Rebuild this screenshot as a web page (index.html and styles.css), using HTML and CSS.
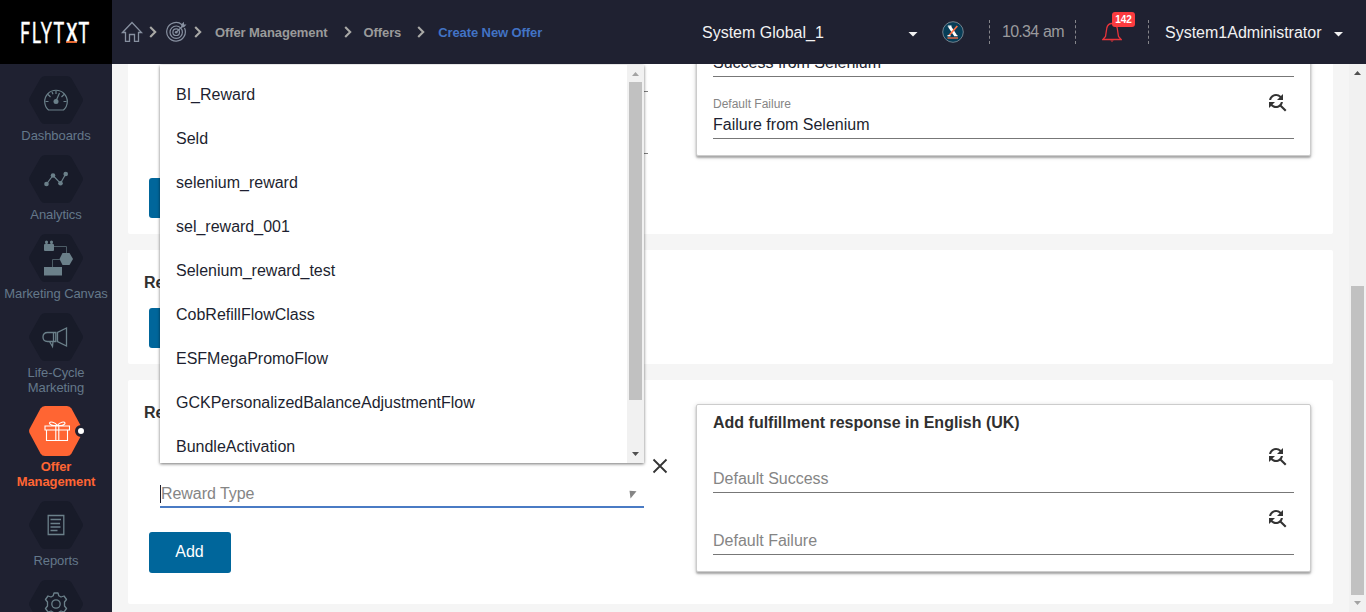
FILE: index.html
```html
<!DOCTYPE html>
<html lang="en">
<head>
<meta charset="utf-8">
<title>Create New Offer</title>
<link rel="stylesheet" href="styles.css">
</head>
<body>
<svg class="defs" width="0" height="0">
  <symbol id="find-replace" viewBox="0 0 24 24"><path d="M11 6c1.38 0 2.63.56 3.54 1.46L12 10h6V4l-2.05 2.05C14.68 4.78 12.93 4 11 4c-3.53 0-6.43 2.61-6.92 6H6.1c.46-2.28 2.48-4 4.9-4zm5.64 9.14c.66-.9 1.12-1.97 1.28-3.14H15.9c-.46 2.28-2.48 4-4.9 4-1.38 0-2.63-.56-3.54-1.46L10 12H4v6l2.05-2.05C7.32 17.22 9.07 18 11 18c1.55 0 2.98-.51 4.14-1.36L20 21.49 21.49 20l-4.85-4.86z"/></symbol>
  <symbol id="chevron" viewBox="0 0 8 12"><path d="M1.2 1l5 5-5 5" fill="none" stroke="#a9a9a6" stroke-width="2.1"/></symbol>
  <symbol id="hexagon" viewBox="0 0 54 48" preserveAspectRatio="none"><path d="M16 0H38Q41 0 42.5 2.500L53.500 22Q54.300 24 53.500 26L42.500 45.500Q41 48 38 48H16Q13 48 11.500 45.500L.5 26Q-.3 24 .5 22L11.500 2.500Q13 0 16 0Z"/></symbol>
</svg>
<header class="topbar">
  <div class="logo"><div class="wordmark">FLYT<span class="logo-x">X</span>T</div></div>
  <nav class="crumbs">
    <svg class="home" width="22" height="22" viewBox="0 0 22 22"><path d="M1.500 11.500L11 1.500l9.500 10H17.500V20.300H13.500V13.500H8.500V20.300H4.500V11.500Z" fill="none" stroke="#8790a0" stroke-width="1.300"/></svg>
    <svg class="chev c1" width="8" height="12"><use href="#chevron"/></svg>
    <svg class="target" width="22" height="22" viewBox="0 0 22 22"><g fill="none" stroke="#8790a0" stroke-width="1.200"><path d="M16 3.700A9.300 9.300 0 1 0 18.500 7"/><circle cx="10.200" cy="11.200" r="6.200"/><circle cx="10.200" cy="11.200" r="3.300"/><path d="M10.200 11.200L18 4"/></g><path d="M15.200 6.300V3.500L18 .8V3.500H20.500L18 6.300Z" fill="#8790a0"/><circle cx="10.200" cy="11.200" r="1.300" fill="#8790a0"/></svg>
    <svg class="chev c2" width="8" height="12"><use href="#chevron"/></svg>
    <span class="crumb">Offer Management</span>
    <svg class="chev c3" width="8" height="12"><use href="#chevron"/></svg>
    <span class="crumb">Offers</span>
    <svg class="chev c4" width="8" height="12"><use href="#chevron"/></svg>
    <span class="crumb current">Create New Offer</span>
  </nav>
  <div class="tenant"><span>System Global_1</span><i class="caret"></i></div>
  <svg class="badge-x" width="22" height="22" viewBox="0 0 22 22"><circle cx="11" cy="11" r="10.300" fill="#073d57" stroke="#71808c" stroke-width="1"/><path d="M7.500 5.500L13.500 14.500" stroke="#fff" stroke-width="3"/><path d="M5.800 5.200H9.500M12.200 14.700H15.500" stroke="#fff" stroke-width="1.300"/><path d="M15.300 5L7 14.500" stroke="#ff7043" stroke-width="1.700"/><path d="M5.500 14.700H8.500" stroke="#fff" stroke-width="1.300"/><path d="M5.500 17H16" stroke="#ff7043" stroke-width="1.300"/></svg>
  <div class="clock">10.34 am</div>
  <div class="alerts">
    <svg width="20" height="20" viewBox="0 0 20 20"><path d="M.8 17.500H19.200L16.500 14.500 15.200 6C14.500 3 12.500 1.500 10 1.500S5.500 3 4.800 6L3.500 14.500Z" fill="none" stroke="#e8343b" stroke-width="1.300"/><path d="M8.200 18.500H11.800Q10 20.800 8.200 18.500Z" fill="#e8343b"/></svg>
    <span class="count">142</span>
  </div>
  <div class="user"><span>System1Administrator</span><i class="caret"></i></div>
</header>
<div class="shell">
  <aside class="sidebar">
    <a class="item"><span class="hex"><svg class="hexbg"><use href="#hexagon"/></svg>
      <svg class="glyph" width="26" height="24" viewBox="0 0 26 24"><g fill="none" stroke="#6b808a" stroke-width="1.200"><path d="M5.500 22A11.300 11.300 0 1 1 20.500 22Z"/><path d="M2.500 13.500H5.500M20.500 13.500H23.500M5 6.500L7.500 9M21 6.500L18.500 9M13 3V6M9 4L10 6.200M13 13L16.500 5"/></g><circle cx="13" cy="13.500" r="2.500" fill="#6b808a"/></svg></span>
      <span class="label">Dashboards</span></a>
    <a class="item"><span class="hex"><svg class="hexbg"><use href="#hexagon"/></svg>
      <svg class="glyph" width="26" height="24" viewBox="0 0 26 24"><path d="M3.500 17L10 8.500 17.500 16.300 22.700 7" fill="none" stroke="#6b808a" stroke-width="1.200"/><g fill="#6b808a"><circle cx="3.500" cy="17" r="2.300"/><circle cx="10" cy="8.500" r="2.300"/><circle cx="17.500" cy="16.300" r="2.300"/><circle cx="22.700" cy="7" r="2.300"/></g></svg></span>
      <span class="label">Analytics</span></a>
    <a class="item"><span class="hex"><svg class="hexbg"><use href="#hexagon"/></svg>
      <svg class="glyph canvas-glyph" width="30" height="36" viewBox="0 0 30 36"><g fill="#6b808a"><rect x="1" y="4" width="10" height="7" rx="1"/><rect x="2.500" y="1.500" width="2" height="4"/><rect x="7.500" y="1.500" width="2" height="4"/><circle cx="3.500" cy="2" r="1.500"/><circle cx="8.500" cy="2" r="1.500"/><path d="M19.500 13H26.500L30 19 26.500 25H19.500L16.500 19Z"/><rect x="1" y="27" width="18" height="8.500"/></g><path d="M11 6.500H23.500V13M17 19.500H9.500V27" fill="none" stroke="#4c5c66" stroke-width="1"/></svg></span>
      <span class="label">Marketing Canvas</span></a>
    <a class="item"><span class="hex"><svg class="hexbg"><use href="#hexagon"/></svg>
      <svg class="glyph horn" width="28" height="24" viewBox="0 0 28 24"><g fill="none" stroke="#6b808a" stroke-width="1.300"><path d="M14.800 7.500H6.500Q2 7.500 2 12T6.500 16.500H14.800ZM12.500 7.500V16.500M25.500 3V21L16.500 16.500V7.500ZM8.500 16.500L11.500 21.500 12 16.500"/></g></svg></span>
      <span class="label">Life-Cycle<br>Marketing</span></a>
    <a class="item active"><span class="hex"><svg class="hexbg"><use href="#hexagon"/></svg>
      <svg class="glyph gift" width="26" height="22" viewBox="0 0 26 22"><g fill="none" stroke="#fff" stroke-width="1.100"><path d="M1 6H25.500V10H1ZM2.500 10V20.500H23.500V10M11.800 6V20.500M14.800 6V20.500M13.300 5.500C9 6 5 4.500 5.500 3S11 1.500 13.300 5.500C16 1.500 20.500 1.500 21 3S18 6 13.300 5.500"/></g></svg><i class="dot"></i></span>
      <span class="label">Offer<br>Management</span></a>
    <a class="item"><span class="hex"><svg class="hexbg"><use href="#hexagon"/></svg>
      <svg class="glyph" width="18" height="22" viewBox="0 0 18 22"><path d="M1.200 1.500H16.800V20.500H1.200Z" fill="none" stroke="#6b808a" stroke-width="1.300"/><path d="M3.500 5.500H14M3.500 9.500H13M3.500 13H13.500M3.500 16.500H10.500" stroke="#6b808a" stroke-width="1.300"/></svg></span>
      <span class="label">Reports</span></a>
    <a class="item"><span class="hex"><svg class="hexbg"><use href="#hexagon"/></svg>
      <svg class="glyph" width="24" height="24" viewBox="0 0 24 24"><g fill="none" stroke="#6b808a" stroke-width="1.300"><circle cx="12" cy="12" r="4.200"/><path d="M10 1H14L14.800 3.800 17 5 20 4 22.500 7.500 20.500 10V14L22.500 16.500 20 20 17 19 14.800 20.200 14 23H10L9.200 20.200 7 19 4 20 1.500 16.500 3.500 14V10L1.500 7.500 4 4 7 5 9.200 3.800Z" stroke-linejoin="round"/></g></svg></span></a>
  </aside>
  <main class="main">
    <div class="scrolled">
      <section class="card first">
        <div class="form">
          <div class="underline u1"></div>
          <div class="underline u2"></div>
          <button class="btn"></button>
        </div>
        <div class="panel">
          <h3></h3>
          <div class="field filled"><div class="value">Success from Selenium</div></div>
          <div class="field filled"><div class="caption">Default Failure</div><div class="value">Failure from Selenium</div><svg class="find"><use href="#find-replace"/></svg></div>
        </div>
      </section>
      <section class="card second">
        <h2>Re</h2>
        <button class="btn"></button>
      </section>
      <section class="card third">
        <div class="form">
          <h2>Re</h2>
          <div class="select-row">
            <div class="select"><span>Reward Type</span>
              <svg class="tri" width="8" height="9" viewBox="0 0 8 9"><path d="M.5 .8L7.500 1.200 1.500 8.500Z" fill="#858585"/></svg></div>
            <svg class="close" width="24" height="24" viewBox="0 0 24 24"><path d="M5.500 5.500l13 13M18.500 5.500l-13 13" stroke="#333" stroke-width="1.800"/></svg>
          </div>
          <button class="btn">Add</button>
        </div>
        <div class="panel">
          <h3>Add fulfillment response in English (UK)</h3>
          <div class="field"><div class="value">Default Success</div><svg class="find"><use href="#find-replace"/></svg></div>
          <div class="field"><div class="value">Default Failure</div><svg class="find"><use href="#find-replace"/></svg></div>
        </div>
      </section>
    </div>
    <div class="options">
      <ul>
        <li>BI_Reward</li><li>Seld</li><li>selenium_reward</li><li>sel_reward_001</li><li>Selenium_reward_test</li><li>CobRefillFlowClass</li><li>ESFMegaPromoFlow</li><li>GCKPersonalizedBalanceAdjustmentFlow</li><li>BundleActivation</li>
      </ul>
      <div class="bar"><i class="up pale"></i><div class="thumb"></div><i class="down"></i></div>
    </div>
  </main>
  <div class="bar page-bar"><i class="up"></i><div class="thumb"></div><i class="down pale"></i></div>
</div>
</body>
</html>
```

FILE: styles.css
```css
* { box-sizing: border-box; }
body { margin: 0; width: 1366px; height: 612px; overflow: hidden; background: #f5f5f5; font: 16px/18px "Liberation Sans", Arial, sans-serif; color: #1d1f30; }
svg { display: block; flex: none; }
.defs { position: absolute; }
h2, h3, ul { margin: 0; padding: 0; font-size: 16px; color: #303030; }

.topbar { display: flex; align-items: center; height: 64px; background: #1f2131; color: #f2f2f2; white-space: nowrap; }
.logo { display: flex; align-items: center; width: 112px; height: 64px; padding-left: 20px; background: #000; }
.wordmark { display: flex; align-items: flex-start; height: 30px; font: 28px/30px Lato, sans-serif; color: #fff; -webkit-text-stroke: .4px #fff; letter-spacing: 2.5px; transform: scaleX(.64); transform-origin: 0 50%; }
.logo-x { height: 26px; margin-right: 2px; padding-left: 1px; font-size: 25px; line-height: 28px; font-weight: 700; letter-spacing: 0; border-bottom: 2px solid #e4682f; }
.crumbs { display: flex; align-items: center; width: 590px; padding-left: 9px; font-size: 13px; font-weight: 700; letter-spacing: -.1px; color: #9a9a9a; }
.crumb { padding-top: 1px; }
.c1 { margin: 0 9px 0 6px; }
.c2 { margin: 0 13px 0 6px; }
.c3 { margin: 0 12px 0 16px; }
.c4 { margin: 0 13px 0 16px; }
.crumb.current { color: #4273c5; }
.tenant { display: flex; align-items: center; justify-content: space-between; width: 216px; margin-right: 24px; padding-top: 2px; }
.caret { width: 10px; height: 5px; margin-top: 2px; background: #f2f2f2; clip-path: polygon(0 0, 100% 0, 50% 100%); }
.clock { width: 87px; height: 24px; margin-left: 25px; padding-left: 12px; line-height: 24px; letter-spacing: -.75px; word-spacing: 1px; color: #9a9a9d; border-left: 1px dashed #85858a; border-right: 1px dashed #85858a; }
.alerts { position: relative; display: flex; align-items: center; width: 73px; height: 24px; padding-left: 26px; border-right: 1px dashed #85858a; }
.count { position: absolute; left: 36px; top: -8px; width: 23px; height: 15px; border-radius: 3px; background: #fb3b3f; color: #fff; font: 700 10px/15px "Liberation Sans", sans-serif; text-align: center; }
.user { display: flex; align-items: center; gap: 12px; margin-left: 16px; padding-top: 2px; }

.shell { display: flex; height: 548px; }
.sidebar { width: 112px; height: 548px; padding-top: 12px; overflow: hidden; background: #1f2131; }
.item { display: flex; flex-direction: column; align-items: center; margin-bottom: 12px; font-size: 13px; line-height: 15px; letter-spacing: -.08px; color: #64788a; text-align: center; white-space: nowrap; }
.hex { position: relative; display: grid; place-items: center; width: 54px; height: 48px; margin-bottom: 4px; }
.hex > * { grid-area: 1 / 1; }
.hexbg { width: 54px; height: 100%; fill: #181b29; }
.hexbg use { width: 100%; height: 100%; }
.glyph { position: relative; }
.canvas-glyph { margin-left: 4px; }
.horn { margin-right: 2px; }
.active { margin-top: -1px; font-weight: 700; color: #ff6533; }
.active .hex { height: 50px; margin-bottom: 3px; }
.active .hexbg { fill: #ff6533; }
.gift { margin-left: 1px; }
.dot { position: absolute; right: -4px; top: 19px; width: 12px; height: 12px; border: 3px solid #1f2131; border-radius: 50%; background: #fff; }

.main { position: relative; width: 1237px; height: 548px; padding: 0 16px; overflow: hidden; }
.scrolled { margin-top: -100px; }
.card { width: 1205px; margin-bottom: 16px; border-radius: 2px; background: #fff; }
.first, .third { display: flex; padding-top: 24px; }
.first { height: 270px; }
.second { height: 114px; padding-top: 24px; }
.third { height: 224px; }
.form { width: 568px; }
.card h2 { padding-left: 16px; line-height: 18px; }
.btn { display: block; width: 82px; height: 40px; margin-left: 21px; padding: 0; border: 0; border-radius: 3px; background: #00669b; color: #fff; font: 16px/38px "Liberation Sans", Arial, sans-serif; }
.underline { width: 488px; margin-left: 32px; border-bottom: 1px solid #808080; }
.u1 { height: 104px; }
.u2 { height: 62px; margin-bottom: 24px; }
.second .btn { margin-top: 16px; }
.third .btn { height: 41px; margin-top: 24px; padding: 0 1px 2px 0; }
.select-row { display: flex; gap: 4px; height: 54px; margin: 32px 0 0 32px; }
.select { display: flex; align-items: flex-end; justify-content: space-between; width: 484px; padding: 0 7px 3px 0; border-bottom: 2px solid #4a7bc4; color: #858585; }
.select span { border-left: 1px solid #1d1f30; letter-spacing: -.05px; }
.tri { margin-bottom: 4px; }
.panel { width: 615px; height: 168px; padding: 9px 16px 0; border: 1px solid #ccc; border-radius: 2px; box-shadow: 0 2px 2px rgba(0,0,0,.28), 0 1px 5px rgba(0,0,0,.16); background: #fff; }
.panel h3 { height: 17px; line-height: 17px; }
.field { display: flex; flex-wrap: wrap; align-content: flex-end; align-items: flex-end; position: relative; height: 62px; width: 581px; border-bottom: 1px solid #777; color: #858585; }
.field .value { width: 540px; margin-bottom: 4px; }
.field .find { position: absolute; right: 5px; bottom: 24px; }
.filled .value { color: #1d1f30; }
.caption { width: 540px; height: 15px; margin-bottom: 4px; font-size: 12px; line-height: 15px; }
.find { width: 24px; height: 24px; fill: #333; }

.options { position: absolute; left: 48px; top: 1px; display: flex; width: 484px; height: 398px; overflow: hidden; background: #fff; box-shadow: 0 1px 3px rgba(0,0,0,.55); }
.options ul { flex: 1; padding-top: 8px; list-style: none; color: #1d1f30; }
.options li { height: 44px; padding-left: 16px; line-height: 44px; }
.bar { display: flex; flex-direction: column; align-items: center; width: 17px; height: 100%; background: #f1f1f1; }
.bar .thumb { width: 13px; height: 318px; background: #c1c1c1; }
.up, .down { width: 7px; height: 4px; background: #505050; }
.pale { background: #a3a3a3; }
.up { margin: 7px 0 6px; clip-path: polygon(50% 0, 100% 100%, 0 100%); }
.down { margin: auto 0 7px; clip-path: polygon(0 0, 100% 0, 50% 100%); }
.page-bar .thumb { height: 309px; margin-top: 205px; }
```
